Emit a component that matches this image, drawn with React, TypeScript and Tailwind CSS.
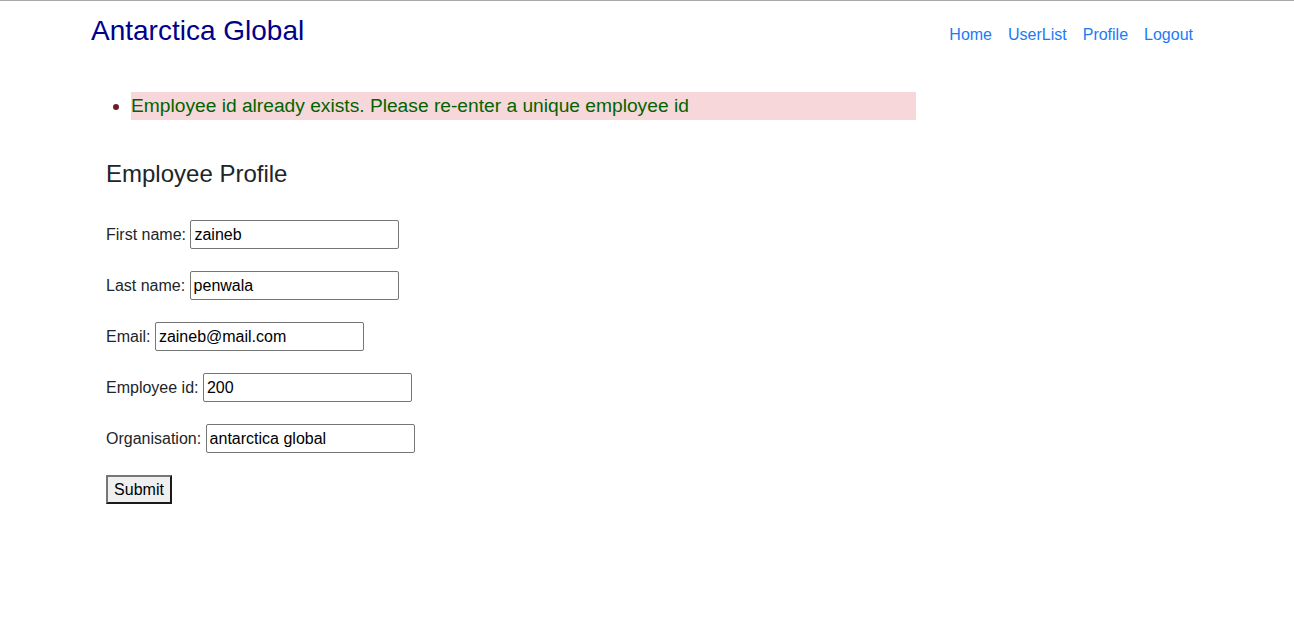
import React from "react";

const fields = [
  { label: "First name:", value: "zaineb" },
  { label: "Last name:", value: "penwala" },
  { label: "Email:", value: "zaineb@mail.com" },
  { label: "Employee id:", value: "200" },
  { label: "Organisation:", value: "antarctica global" },
];

export default function App() {
  return (
    <div
      className="min-h-[638px] w-full bg-white border-t border-[#aaaaaa] text-[#212529]"
      style={{ fontFamily: '"Liberation Sans", Arial, sans-serif' }}
    >
      <div className="mx-auto w-[1140px] pl-[14px] pr-[16px]">
        <header className="flex items-start justify-between">
          <div className="mt-[13px] text-[28px] leading-[1.2] text-[#00008b]">
            Antarctica Global
          </div>
          <nav className="mt-[22px] flex text-[16px] leading-[24px] text-[#1a7bf6]">
            <a className="px-[8px]">Home</a>
            <a className="px-[8px]">UserList</a>
            <a className="px-[8px]">Profile</a>
            <a className="px-[8px]">Logout</a>
          </nav>
        </header>

        <ul className="mt-[44px] list-disc pl-[40px] text-[#721c24]">
          <li className="h-[28px] w-[785px] bg-[#f8d7da] text-[19.2px] leading-[28px]">
            <span className="text-[#006400]">
              Employee id already exists. Please re-enter a unique employee id
            </span>
          </li>
        </ul>

        <div className="pl-[15px]">
          <h2 className="mt-[40px] text-[24px] leading-[1.2] text-[#212529]">Employee Profile</h2>
          <form className="mt-[32px] flex flex-col gap-[22px]">
            {fields.map((f) => (
              <div key={f.label} className="flex items-center text-[16px] leading-[24px]">
                <span className="mr-[4.45px]">{f.label}</span>
                <input
                  readOnly
                  value={f.value}
                  className="h-[29px] w-[209px] rounded-[2px] border border-[#767676] bg-white px-[3px] text-[16px] text-black outline-none"
                />
              </div>
            ))}
            <div>
              <button
                type="button"
                className="h-[29px] w-[66px] border-2 border-t-[#767676] border-l-[#767676] border-b-[#1a1a1a] border-r-[#1a1a1a] bg-[#efefef] text-[16px] text-black"
              >
                Submit
              </button>
            </div>
          </form>
        </div>
      </div>
    </div>
  );
}
